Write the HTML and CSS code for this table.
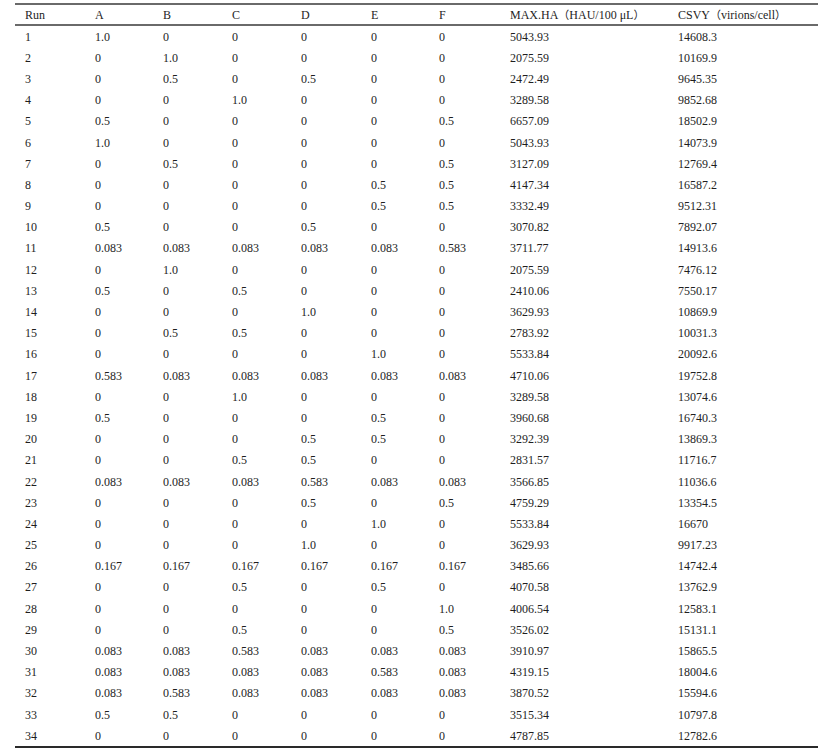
FILE: index.html
```html
<!DOCTYPE html>
<html lang="en">
<head>
<meta charset="utf-8">
<title>Runs</title>
<link rel="stylesheet" href="styles.css">
</head>
<body>
<table class="data">
<colgroup>
<col class="c-run"><col class="c-a"><col class="c-b"><col class="c-c"><col class="c-d"><col class="c-e"><col class="c-f"><col class="c-max"><col class="c-csvy">
</colgroup>
<thead>
<tr><th>Run</th><th>A</th><th>B</th><th>C</th><th>D</th><th>E</th><th>F</th><th>MAX.HA<span class="fw">（</span>HAU/100 μL<span class="fw">）</span></th><th>CSVY<span class="fw">（</span>virions/cell<span class="fw">）</span></th></tr>
</thead>
<tbody>
<tr><td>1</td><td>1.0</td><td>0</td><td>0</td><td>0</td><td>0</td><td>0</td><td>5043.93</td><td>14608.3</td></tr>
<tr><td>2</td><td>0</td><td>1.0</td><td>0</td><td>0</td><td>0</td><td>0</td><td>2075.59</td><td>10169.9</td></tr>
<tr><td>3</td><td>0</td><td>0.5</td><td>0</td><td>0.5</td><td>0</td><td>0</td><td>2472.49</td><td>9645.35</td></tr>
<tr><td>4</td><td>0</td><td>0</td><td>1.0</td><td>0</td><td>0</td><td>0</td><td>3289.58</td><td>9852.68</td></tr>
<tr><td>5</td><td>0.5</td><td>0</td><td>0</td><td>0</td><td>0</td><td>0.5</td><td>6657.09</td><td>18502.9</td></tr>
<tr><td>6</td><td>1.0</td><td>0</td><td>0</td><td>0</td><td>0</td><td>0</td><td>5043.93</td><td>14073.9</td></tr>
<tr><td>7</td><td>0</td><td>0.5</td><td>0</td><td>0</td><td>0</td><td>0.5</td><td>3127.09</td><td>12769.4</td></tr>
<tr><td>8</td><td>0</td><td>0</td><td>0</td><td>0</td><td>0.5</td><td>0.5</td><td>4147.34</td><td>16587.2</td></tr>
<tr><td>9</td><td>0</td><td>0</td><td>0</td><td>0</td><td>0.5</td><td>0.5</td><td>3332.49</td><td>9512.31</td></tr>
<tr><td>10</td><td>0.5</td><td>0</td><td>0</td><td>0.5</td><td>0</td><td>0</td><td>3070.82</td><td>7892.07</td></tr>
<tr><td>11</td><td>0.083</td><td>0.083</td><td>0.083</td><td>0.083</td><td>0.083</td><td>0.583</td><td>3711.77</td><td>14913.6</td></tr>
<tr><td>12</td><td>0</td><td>1.0</td><td>0</td><td>0</td><td>0</td><td>0</td><td>2075.59</td><td>7476.12</td></tr>
<tr><td>13</td><td>0.5</td><td>0</td><td>0.5</td><td>0</td><td>0</td><td>0</td><td>2410.06</td><td>7550.17</td></tr>
<tr><td>14</td><td>0</td><td>0</td><td>0</td><td>1.0</td><td>0</td><td>0</td><td>3629.93</td><td>10869.9</td></tr>
<tr><td>15</td><td>0</td><td>0.5</td><td>0.5</td><td>0</td><td>0</td><td>0</td><td>2783.92</td><td>10031.3</td></tr>
<tr><td>16</td><td>0</td><td>0</td><td>0</td><td>0</td><td>1.0</td><td>0</td><td>5533.84</td><td>20092.6</td></tr>
<tr><td>17</td><td>0.583</td><td>0.083</td><td>0.083</td><td>0.083</td><td>0.083</td><td>0.083</td><td>4710.06</td><td>19752.8</td></tr>
<tr><td>18</td><td>0</td><td>0</td><td>1.0</td><td>0</td><td>0</td><td>0</td><td>3289.58</td><td>13074.6</td></tr>
<tr><td>19</td><td>0.5</td><td>0</td><td>0</td><td>0</td><td>0.5</td><td>0</td><td>3960.68</td><td>16740.3</td></tr>
<tr><td>20</td><td>0</td><td>0</td><td>0</td><td>0.5</td><td>0.5</td><td>0</td><td>3292.39</td><td>13869.3</td></tr>
<tr><td>21</td><td>0</td><td>0</td><td>0.5</td><td>0.5</td><td>0</td><td>0</td><td>2831.57</td><td>11716.7</td></tr>
<tr><td>22</td><td>0.083</td><td>0.083</td><td>0.083</td><td>0.583</td><td>0.083</td><td>0.083</td><td>3566.85</td><td>11036.6</td></tr>
<tr><td>23</td><td>0</td><td>0</td><td>0</td><td>0.5</td><td>0</td><td>0.5</td><td>4759.29</td><td>13354.5</td></tr>
<tr><td>24</td><td>0</td><td>0</td><td>0</td><td>0</td><td>1.0</td><td>0</td><td>5533.84</td><td>16670</td></tr>
<tr><td>25</td><td>0</td><td>0</td><td>0</td><td>1.0</td><td>0</td><td>0</td><td>3629.93</td><td>9917.23</td></tr>
<tr><td>26</td><td>0.167</td><td>0.167</td><td>0.167</td><td>0.167</td><td>0.167</td><td>0.167</td><td>3485.66</td><td>14742.4</td></tr>
<tr><td>27</td><td>0</td><td>0</td><td>0.5</td><td>0</td><td>0.5</td><td>0</td><td>4070.58</td><td>13762.9</td></tr>
<tr><td>28</td><td>0</td><td>0</td><td>0</td><td>0</td><td>0</td><td>1.0</td><td>4006.54</td><td>12583.1</td></tr>
<tr><td>29</td><td>0</td><td>0</td><td>0.5</td><td>0</td><td>0</td><td>0.5</td><td>3526.02</td><td>15131.1</td></tr>
<tr><td>30</td><td>0.083</td><td>0.083</td><td>0.583</td><td>0.083</td><td>0.083</td><td>0.083</td><td>3910.97</td><td>15865.5</td></tr>
<tr><td>31</td><td>0.083</td><td>0.083</td><td>0.083</td><td>0.083</td><td>0.583</td><td>0.083</td><td>4319.15</td><td>18004.6</td></tr>
<tr><td>32</td><td>0.083</td><td>0.583</td><td>0.083</td><td>0.083</td><td>0.083</td><td>0.083</td><td>3870.52</td><td>15594.6</td></tr>
<tr><td>33</td><td>0.5</td><td>0.5</td><td>0</td><td>0</td><td>0</td><td>0</td><td>3515.34</td><td>10797.8</td></tr>
<tr><td>34</td><td>0</td><td>0</td><td>0</td><td>0</td><td>0</td><td>0</td><td>4787.85</td><td>12782.6</td></tr>
</tbody>
</table>
</body>
</html>
```
FILE: styles.css
```css
html, body {
  margin: 0;
  padding: 0;
  background: #ffffff;
}

body {
  font-family: "Liberation Serif", "Noto Sans CJK SC", serif;
  font-size: 12px;
  color: #1e1e1e;
}

.data {
  margin: 3px 0 0 15px;
  width: 803px;
  table-layout: fixed;
  border-collapse: collapse;
  border-top: 2px solid #6a6a6a;
  border-bottom: 2px solid #2a2a2a;
}

.c-run { width: 70px; }
.c-a { width: 68px; }
.c-b { width: 69px; }
.c-c { width: 69px; }
.c-d { width: 70px; }
.c-e { width: 68px; }
.c-f { width: 71px; }
.c-max { width: 168px; }
.c-csvy { width: 150px; }

.data th,
.data td {
  padding: 0 0 0 10px;
  text-align: left;
  white-space: nowrap;
  line-height: 14px;
}

.data th {
  font-weight: normal;
  height: 19px;
  border-bottom: 2px solid #6a6a6a;
}

.data td {
  height: 21.2px;
}

.fw {
  font-family: "Noto Sans CJK SC", sans-serif;
  font-size: 11px;
}
```
